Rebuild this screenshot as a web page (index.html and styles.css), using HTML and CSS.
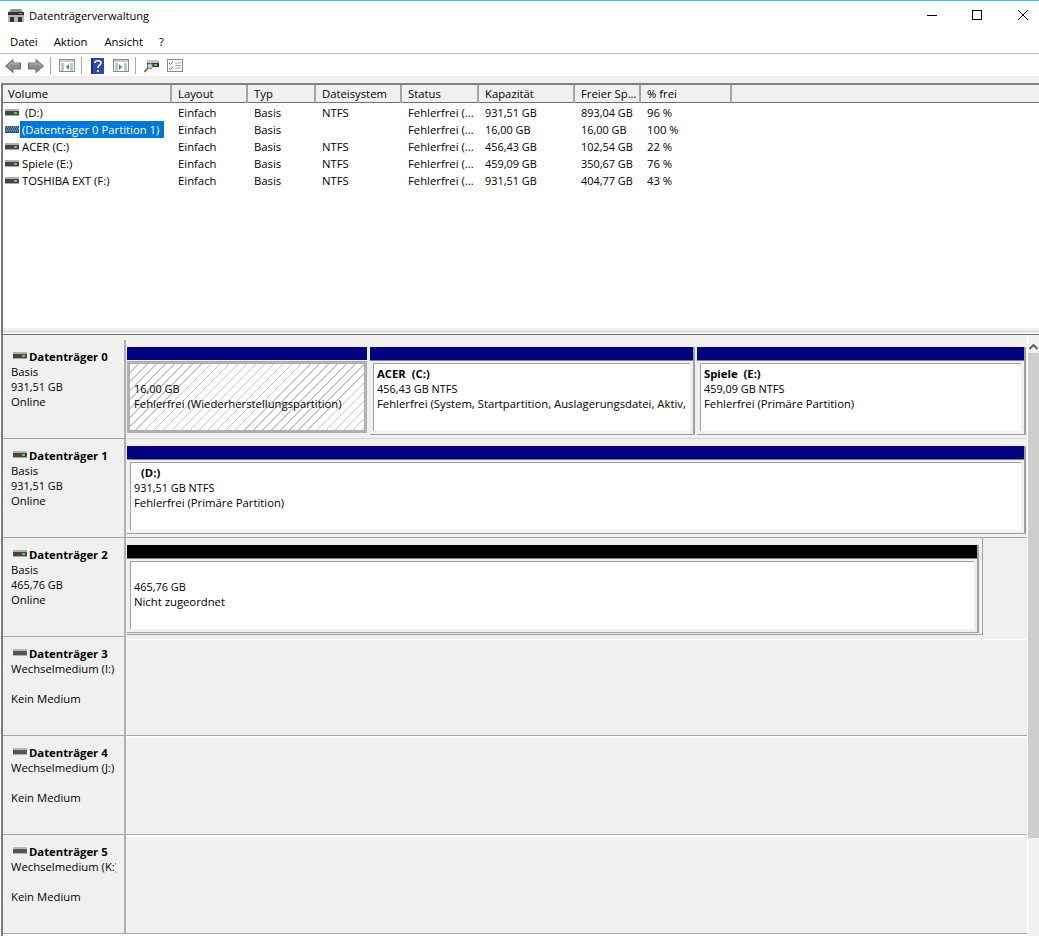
FILE: index.html
```html
<!DOCTYPE html>
<html lang="de">
<head>
<meta charset="utf-8">
<title>Datenträgerverwaltung</title>
<link rel="stylesheet" href="styles.css">
</head>
<body>
<svg class="defs" width="0" height="0" aria-hidden="true">
  <symbol id="disk" viewBox="0 0 14 7">
    <rect x="0" y="0" width="14" height="2" fill="#b0b0b0"/>
    <rect x="0" y="2" width="14" height="4" fill="#444"/>
    <rect x="0" y="6" width="14" height="1" fill="#a8a8a8"/>
    <rect x="9" y="3" width="3" height="2" fill="#5fd04a"/>
  </symbol>
  <symbol id="disk-off" viewBox="0 0 14 7">
    <rect x="0" y="0" width="14" height="2" fill="#b8b8b8"/>
    <rect x="0" y="2" width="14" height="4" fill="#555"/>
    <rect x="0" y="6" width="14" height="1" fill="#b0b0b0"/>
  </symbol>
  <symbol id="disk-hatch" viewBox="0 0 14 7">
    <rect x="0" y="0" width="14" height="7" fill="#2e4f7c"/>
    <path d="M0 1h14M1 3h13M0 5h14" stroke="#b4cfe8" stroke-width="1" stroke-dasharray="1 1"/>
  </symbol>
  <symbol id="arrow-l" viewBox="0 0 16 16">
    <path d="M0.5 8 8 1.5V5h7.5v6H8v3.5z" fill="#8c8c8c" stroke="#6e6e6e"/>
    <path d="M3 8 7 4.5V6h7" fill="none" stroke="#b8b8b8"/>
  </symbol>
  <symbol id="arrow-r" viewBox="0 0 16 16">
    <path d="M15.5 8 8 1.5V5H0.5v6H8v3.5z" fill="#8c8c8c" stroke="#6e6e6e"/>
    <path d="M2 6h7V4.5L13 8" fill="none" stroke="#b8b8b8"/>
  </symbol>
  <symbol id="win" viewBox="0 0 16 13">
    <rect x="0.5" y="0.5" width="15" height="12" fill="#fff" stroke="#8a8a8a"/>
    <rect x="1" y="1" width="14" height="2" fill="#c8ccd0"/>
    <path d="M2 5h3M2 7h3M2 9h3M2 11h3M11 5h3M11 7h3M11 9h3M11 11h3" stroke="#6f8fb0"/>
  </symbol>
</svg>

<div class="app">
  <header class="titlebar">
    <svg class="app-icon" width="16" height="13" viewBox="0 0 16 13">
      <path d="M3 0h10l3 5H0z" fill="#8f8f8f"/>
      <rect x="0" y="3" width="16" height="3" fill="#333"/>
      <rect x="11" y="4" width="3" height="1" fill="#5fd04a"/>
      <rect x="0" y="6" width="16" height="7" fill="#b4b4b4"/>
      <rect x="2" y="8" width="4" height="5" fill="#333"/>
      <rect x="10" y="8" width="4" height="5" fill="#333"/>
    </svg>
    <span class="title">Datenträgerverwaltung</span>
    <div class="winctl">
      <svg width="10" height="10" viewBox="0 0 10 10"><path d="M0 5.5h10" stroke="#000"/></svg>
      <svg class="max" width="10" height="10" viewBox="0 0 10 10"><rect x="0.5" y="0.5" width="9" height="9" fill="none" stroke="#000"/></svg>
      <svg width="10" height="10" viewBox="0 0 10 10"><path d="M0 0 10 10M10 0 0 10" stroke="#000"/></svg>
    </div>
  </header>

  <nav class="menubar">
    <span>Datei</span><span>Aktion</span><span>Ansicht</span><span>?</span>
  </nav>

  <div class="toolbar">
    <svg class="t-back" width="16" height="16"><use href="#arrow-l"/></svg>
    <svg class="t-fwd" width="16" height="16"><use href="#arrow-r"/></svg>
    <i class="t-sep"></i>
    <svg class="t-btn" width="16" height="13" viewBox="0 0 16 13"><use href="#win" width="16" height="13"/><path d="M10 5v6L7 8z" fill="#2fa33a"/></svg>
    <i class="t-sep"></i>
    <svg class="t-help" width="13" height="16" viewBox="0 0 13 16"><rect width="13" height="16" fill="#2c4aa6"/><rect x="0" y="0" width="2" height="16" fill="#1a2f78"/><path d="M4 5c0-3 6-3 6 0 0 2-3 2-3 5M7 12v2" fill="none" stroke="#fff" stroke-width="1.6"/></svg>
    <svg class="t-btn2" width="16" height="13" viewBox="0 0 16 13"><use href="#win" width="16" height="13"/><path d="M6 5v6l3-3z" fill="#2fa33a"/></svg>
    <i class="t-sep"></i>
    <svg class="t-find" width="15" height="14" viewBox="0 0 15 14"><rect x="3" y="1" width="12" height="3" fill="#c4c4c4"/><rect x="3" y="4" width="12" height="4" fill="#333"/><rect x="10" y="5" width="3" height="2" fill="#5fd04a"/><circle cx="6" cy="7" r="2.6" fill="#bcd6ea" stroke="#777"/><path d="M4 9 0.5 13" stroke="#a07a3a" stroke-width="2"/></svg>
    <svg class="t-check" width="16" height="13" viewBox="0 0 16 13"><rect x="0.5" y="0.5" width="15" height="12" fill="#fff" stroke="#8a8a8a"/><path d="M2 4l1.5 1.5L6 2.5M2 9l1.5 1.5L6 7.5" fill="none" stroke="#3a78c8"/><path d="M8 4h6M8 6.5h6M8 9h6" stroke="#a8a8a8"/></svg>
  </div>

  <div class="band"></div>

  <section class="list-pane">
    <div class="cols head">
      <div>Volume</div><div>Layout</div><div>Typ</div><div>Dateisystem</div><div>Status</div><div>Kapazität</div><div>Freier Sp...</div><div>% frei</div>
    </div>
    <div class="cols row">
      <div class="vol"><svg width="14" height="7"><use href="#disk"/></svg><span class="name name-d">(D:)</span></div><div>Einfach</div><div>Basis</div><div>NTFS</div><div>Fehlerfrei (...</div><div class="num">931,51 GB</div><div class="num">893,04 GB</div><div>96 %</div>
    </div>
    <div class="cols row">
      <div class="vol"><svg width="14" height="7"><use href="#disk-hatch"/></svg><span class="name selected">(Datenträger 0 Partition 1)</span></div><div>Einfach</div><div>Basis</div><div></div><div>Fehlerfrei (...</div><div class="num">16,00 GB</div><div class="num">16,00 GB</div><div>100 %</div>
    </div>
    <div class="cols row">
      <div class="vol"><svg width="14" height="7"><use href="#disk"/></svg><span class="name">ACER (C:)</span></div><div>Einfach</div><div>Basis</div><div>NTFS</div><div>Fehlerfrei (...</div><div class="num">456,43 GB</div><div class="num">102,54 GB</div><div>22 %</div>
    </div>
    <div class="cols row">
      <div class="vol"><svg width="14" height="7"><use href="#disk"/></svg><span class="name">Spiele (E:)</span></div><div>Einfach</div><div>Basis</div><div>NTFS</div><div>Fehlerfrei (...</div><div class="num">459,09 GB</div><div class="num">350,67 GB</div><div>76 %</div>
    </div>
    <div class="cols row">
      <div class="vol"><svg width="14" height="7"><use href="#disk"/></svg><span class="name">TOSHIBA EXT (F:)</span></div><div>Einfach</div><div>Basis</div><div>NTFS</div><div>Fehlerfrei (...</div><div class="num">931,51 GB</div><div class="num">404,77 GB</div><div>43 %</div>
    </div>
  </section>

  <div class="band2"><div class="band2-in"></div></div>

  <section class="lower">
    <div class="disks">
      <div class="disk line-soft">
        <div class="label"><h4><svg width="14" height="7"><use href="#disk"/></svg>Datenträger 0</h4><p>Basis</p><p class="num">931,51 GB</p><p>Online</p></div>
        <div class="parts">
          <div class="seg seg-rec">
            <div class="bar"></div>
            <div class="hatch"><p class="gap">&nbsp;</p><p class="num">16,00 GB</p><p>Fehlerfrei (Wiederherstellungspartition)</p></div>
          </div>
          <div class="seg seg-acer">
            <div class="bar"></div>
            <div class="frame"><div class="box"><b>ACER  (C:)</b><p class="num">456,43 GB NTFS</p><p>Fehlerfrei (System, Startpartition, Auslagerungsdatei, Aktiv,</p></div></div>
          </div>
          <div class="seg seg-spiele">
            <div class="bar"></div>
            <div class="frame"><div class="box"><b>Spiele  (E:)</b><p class="num">459,09 GB NTFS</p><p>Fehlerfrei (Primäre Partition)</p></div></div>
          </div>
        </div>
      </div>

      <div class="disk line-gray">
        <div class="label"><h4><svg width="14" height="7"><use href="#disk"/></svg>Datenträger 1</h4><p>Basis</p><p class="num">931,51 GB</p><p>Online</p></div>
        <div class="parts">
          <div class="seg seg-full">
            <div class="bar"></div>
            <div class="frame"><div class="box"><b class="d">(D:)</b><p class="num">931,51 GB NTFS</p><p>Fehlerfrei (Primäre Partition)</p></div></div>
          </div>
        </div>
      </div>

      <div class="disk line-none">
        <div class="label"><h4><svg width="14" height="7"><use href="#disk"/></svg>Datenträger 2</h4><p>Basis</p><p class="num">465,76 GB</p><p>Online</p></div>
        <div class="parts">
          <div class="outer">
            <div class="seg seg-un">
              <div class="bar black"></div>
              <div class="frame"><div class="box"><p class="gap">&nbsp;</p><p class="num">465,76 GB</p><p>Nicht zugeordnet</p></div></div>
            </div>
          </div>
        </div>
      </div>

      <div class="disk line-gray after-none">
        <div class="label"><h4><svg width="14" height="7"><use href="#disk-off"/></svg>Datenträger 3</h4><p>Wechselmedium (I:)</p><p class="gap">&nbsp;</p><p>Kein Medium</p></div>
        <div class="parts"></div>
      </div>
      <div class="disk line-gray after-gray">
        <div class="label"><h4><svg width="14" height="7"><use href="#disk-off"/></svg>Datenträger 4</h4><p>Wechselmedium (J:)</p><p class="gap">&nbsp;</p><p>Kein Medium</p></div>
        <div class="parts"></div>
      </div>
      <div class="disk line-gray after-gray">
        <div class="label"><h4><svg width="14" height="7"><use href="#disk-off"/></svg>Datenträger 5</h4><p>Wechselmedium (K:)</p><p class="gap">&nbsp;</p><p>Kein Medium</p></div>
        <div class="parts"></div>
      </div>
      <div class="disks-end"></div>
    </div>
    <div class="scroll">
      <div class="up"><svg width="9" height="6" viewBox="0 0 9 6"><path d="M0.5 5 4.5 1l4 4" fill="none" stroke="#606060" stroke-width="2"/></svg></div>
      <div class="thumb"></div>
    </div>
  </section>
</div>
</body>
</html>
```

FILE: styles.css
```css
* { box-sizing: border-box; }
html, body { margin: 0; padding: 0; }
body {
  width: 1039px;
  height: 936px;
  overflow: hidden;
  background: #fff;
  font-family: "Open Sans", "Noto Sans", "Liberation Sans", sans-serif;
  font-size: 11.3px;
  line-height: 15px;
  color: #000;
}
p, h4 { margin: 0; font-size: inherit; font-weight: normal; }
.defs { position: absolute; }
.app { display: flex; flex-direction: column; height: 936px; border-top: 1px solid #45bcc8; }

.titlebar { height: 31px; display: flex; align-items: center; padding: 0 11px 2px 8px; }
.app-icon { margin: 0 5px 0 0; }
.title { font-size: 11.1px; }
.winctl { margin-left: auto; display: flex; gap: 35px; padding-bottom: 1px; }
.winctl .max { margin-right: 1px; }

.menubar { height: 22px; display: flex; border-bottom: 1px solid #b9b9c3; padding: 0 0 2px 10px; align-items: center; }
.menubar span:nth-child(1) { margin-right: 16px; }
.menubar span:nth-child(2) { margin-right: 17px; }
.menubar span:nth-child(3) { margin-right: 16px; }

.toolbar { height: 22px; display: flex; align-items: center; padding: 1px 0 0 5px; }
.t-fwd { margin-left: 7px; }
.t-sep { width: 1px; height: 17px; background: #a8a8a8; margin-left: 6px; }
.t-btn { margin-left: 8px; }
.t-help { margin-left: 9px; }
.t-btn2 { margin-left: 9px; }
.t-find { margin-left: 8px; }
.t-check { margin-left: 8px; }

.band { height: 7px; background: #f0f0f0; }

.list-pane { height: 245px; border-left: 2px solid #7a7a7a; margin-left: 1px; background: #fff; }
.cols { display: grid; grid-template-columns: 169px 76px 68px 86px 77px 96px 66px 91px; }
.head {
  height: 20px;
  background: #f0f0f0;
  border-top: 2px solid #808080;
  border-bottom: 1px solid #707070;
  margin-bottom: 1px;
}
.head > div {
  padding-left: 5px;
  border-right: 2px solid #a4a4a4;
  line-height: 18px;
}
.head > div + div { padding-left: 6px; }
.row { height: 17px; line-height: 17px; }
.row > div { padding-left: 6px; white-space: nowrap; }
.row > .vol { padding-left: 2px; display: flex; align-items: center; }
.vol svg { flex: none; margin-right: 1px; }
.name { padding: 0 5px 0 2px; }
.name-d { padding-left: 5px; }
.selected { background: #0078d7; color: #fff; }
.num, .label p.num, .row > .num { font-size: 10.9px; }

.band2 { height: 6px; margin-left: 1px; background: #f0f0f0; border-left: 2px solid #7a7a7a; padding-top: 3px; }
.band2-in { height: 3px; border-top: 1px solid #d4d4d4; background: #f4f4f4; }

.lower {
  flex: 1;
  display: flex;
  background: #f0f0f0;
  border-top: 1px solid #707070;
  margin-left: 1px;
  min-height: 0;
}
.disks {
  width: 1027px;
  padding-top: 5px;
  border-left: 2px solid #7a7a7a;
  border-right: 1px solid #fff;
}
.disk { display: flex; height: 99px; }
.disks-end { height: 3px; background: #fff; }
.label {
  width: 123px;
  flex: none;
  padding: 9px 0 0 8px;
  border-right: 2px solid #b0b0b0;
  border-bottom: 1px solid #a6a6a6;
  white-space: nowrap;
}
.label p { width: 105px; overflow: hidden; }
.label h4 { font-weight: 700; display: flex; align-items: center; padding-left: 2px; height: 15px; }
.label svg { margin-right: 2px; margin-bottom: 3px; flex: none; }
.parts { flex: 1; padding: 7px 0 0 1px; display: flex; min-width: 0; border-bottom: 1px solid #a6a6a6; }
.line-soft .parts { border-bottom-color: #d6d6d6; }
.line-none .parts { border-bottom-color: transparent; }
.after-none .parts {
  background: linear-gradient(#f0f0f0 2px, #fff 2px, #fff 3px, #f0f0f0 3px);
}
.after-gray .parts {
  background: linear-gradient(#fff 2px, #f0f0f0 2px);
}

.seg { display: flex; flex-direction: column; height: 88px; flex: none; border-right: 2px solid #a0a0a0; }
.bar { height: 13px; background: #000080; flex: none; }
.bar.black { background: #000; }
.seg-rec { width: 240px; margin-right: 3px; border-right: 0; }
.seg-acer { width: 325px; margin-right: 2px; }
.seg-spiele { width: 329px; }
.seg-full { width: 899px; }
.seg-un { width: 852px; }

.frame {
  flex: 1;
  border-top: 1px solid #808080;
  border-bottom: 1px solid #a0a0a0;
  padding: 2px 3px 3px 3px;
  background: #f0f0f0;
}
.box {
  height: 68px;
  background: #fff;
  border-top: 1px solid #a0a0a0;
  border-left: 1px solid #a0a0a0;
  padding: 2px 0 0 3px;
  white-space: nowrap;
  overflow: hidden;
}
.box b { display: block; font-weight: 700; white-space: pre; }
.box .d { padding-left: 7px; }

.hatch {
  margin-top: 1px;
  height: 72px;
  border: 3px solid #b0b0b0;
  padding: 2px 0 0 4px;
  white-space: nowrap;
  background-color: #fff;
  background-image: repeating-linear-gradient(135deg, #fff 0, #fff 5.4px, #c8c8c8 5.4px, #c8c8c8 6.4px);
}
.outer {
  width: 856px;
  height: 97px;
  margin-top: -7px;
  padding-top: 7px;
  border-right: 1px solid #a0a0a0;
  border-bottom: 1px solid #a0a0a0;
}

.scroll { width: 11px; padding-top: 5px; display: flex; flex-direction: column; }
.up { height: 13px; display: flex; justify-content: center; align-items: center; }
.thumb { height: 485px; background: #cdcdcd; }
```
